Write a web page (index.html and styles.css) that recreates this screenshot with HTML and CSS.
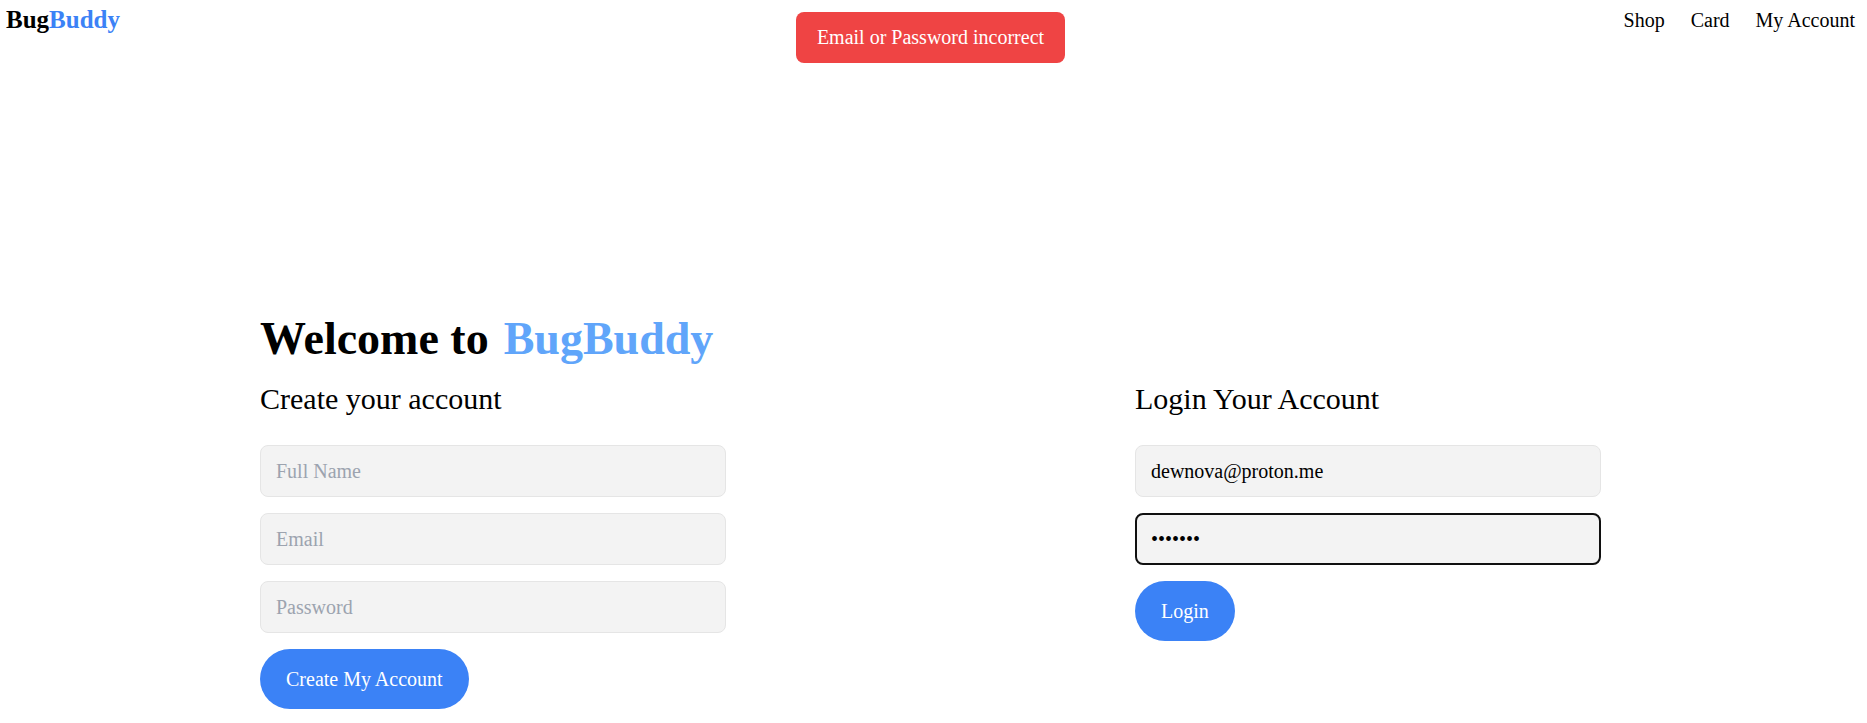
FILE: index.html
```
<!DOCTYPE html>
<html lang="en">
<head>
<meta charset="utf-8">
<title>BugBuddy</title>
<meta name="viewport" content="width=device-width, initial-scale=1">
<link rel="stylesheet" href="styles.css">
</head>
<body>
<header class="navbar">
  <a class="logo" href="#">Bug<span class="logo-accent">Buddy</span></a>
  <nav class="nav-links">
    <a href="#">Shop</a>
    <a href="#">Card</a>
    <a href="#">My Account</a>
  </nav>
</header>
<div class="alert" role="alert">Email or Password incorrect</div>
<main class="account">
  <section class="panel">
    <h1 class="welcome">Welcome to <span class="welcome-accent">BugBuddy</span></h1>
    <h2 class="panel-title">Create your account</h2>
    <form class="form">
      <input class="field" type="text" placeholder="Full Name" aria-label="Full Name">
      <input class="field" type="email" placeholder="Email" aria-label="Email">
      <input class="field" type="password" placeholder="Password" aria-label="Password">
      <button class="button" type="button">Create My Account</button>
    </form>
  </section>
  <section class="panel">
    <h2 class="panel-title">Login Your Account</h2>
    <form class="form">
      <input class="field" type="email" value="dewnova@proton.me" placeholder="Email" aria-label="Email">
      <input class="field field-active" type="password" value="bugbudd" placeholder="Password" aria-label="Password">
      <button class="button" type="button">Login</button>
    </form>
  </section>
</main>
</body>
</html>
```
FILE: styles.css
```
* {
  box-sizing: border-box;
}

body {
  margin: 0;
  padding-right: 6px;
  background: #fff;
  color: #000;
  font-family: "Liberation Serif", "Times New Roman", serif;
  font-size: 20px;
  line-height: 28px;
}

a {
  color: inherit;
  text-decoration: none;
}

.navbar {
  display: flex;
  align-items: center;
  justify-content: space-between;
  padding: 6px;
}

.logo {
  font-size: 25px;
  font-weight: 700;
}

.logo-accent {
  color: #3b82f6;
}

.nav-links {
  display: flex;
  gap: 26px;
}

.alert {
  position: fixed;
  top: 12px;
  left: 0;
  right: 6px;
  width: fit-content;
  margin: 0 auto;
  padding: 12px 21px;
  border-radius: 8px;
  background: #ef4444;
  color: #fff;
  line-height: 27px;
  white-space: nowrap;
}

.account {
  display: flex;
  flex-wrap: wrap;
  align-items: center;
  justify-content: space-between;
  gap: 40px;
  max-width: 1341px;
  margin: 273px auto 0;
}

.panel {
  flex: 0 1 466px;
}

.welcome {
  display: flex;
  flex-wrap: wrap;
  column-gap: 15px;
  margin: 0 0 16px;
  font-size: 46px;
  line-height: 52px;
}

.welcome-accent {
  color: #60a5fa;
}

.panel-title {
  margin: 0 0 28px;
  font-size: 30px;
  font-weight: 400;
  line-height: 36px;
}

.form {
  display: flex;
  flex-direction: column;
  align-items: flex-start;
  gap: 16px;
}

.field {
  width: 100%;
  height: 52px;
  padding: 0 15px;
  border: 1px solid #e5e5e5;
  border-radius: 8px;
  background: #f3f3f3;
  color: #000;
  font: inherit;
}

.field::placeholder {
  color: #9ca3af;
  opacity: 1;
}

.field-active {
  padding: 0 14px;
  border: 2px solid #101010;
  outline: none;
}

.button {
  padding: 16px 26px;
  border: 0;
  border-radius: 32px;
  background: #3b82f6;
  color: #fff;
  font: inherit;
}
```
